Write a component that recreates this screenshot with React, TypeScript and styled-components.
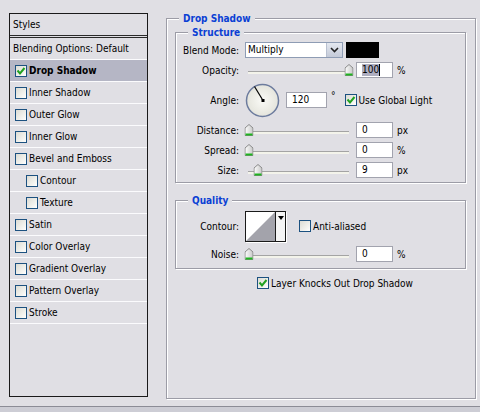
import React from 'react';
import styled, { createGlobalStyle } from 'styled-components';

const BG = '#e0dfe4';

const Global = createGlobalStyle`
  html, body { margin: 0; padding: 0; background: ${BG}; }
  body { font-family: "DejaVu Sans Condensed", "DejaVu Sans", "Liberation Sans", sans-serif; font-size: 10px; color: #000; }
  * { box-sizing: border-box; }
`;

const Window = styled.div`
  width: 480px;
  height: 412px;
  display: flex;
  flex-direction: column;
  background: ${BG};
  overflow: hidden;
`;

const Main = styled.div`
  flex: 1;
  display: flex;
  align-items: flex-start;
  padding: 13px 0 0 9px;
  gap: 18px;
`;

const Footer = styled.div`
  height: 6px;
  border-top: 1px solid #8c8c96;
  background: #cdcdd5;
`;

/* ---------- left list ---------- */
const StylesPanel = styled.div`
  width: 139px;
  height: 384px;
  border: 1px solid #1a1a1a;
  display: flex;
  flex-direction: column;
`;

const PanelHeader = styled.div`
  height: 24px;
  line-height: 21px;
  padding-left: 3px;
  border-bottom: 3px double #2a2a2a;
`;

const ListRow = styled.div<{ $indent?: boolean; $active?: boolean; $plain?: boolean }>`
  height: 22px;
  border-bottom: 1px solid #fbfbfd;
  display: flex;
  align-items: center;
  gap: 2px;
  padding-left: ${(p) => (p.$plain ? 3 : p.$indent ? 16 : 5)}px;
  background: ${(p) => (p.$active ? '#b5b6c5' : 'transparent')};
  font-weight: ${(p) => (p.$active ? 700 : 400)};
  white-space: nowrap;
`;

/* ---------- checkbox ---------- */
const Box = styled.span`
  width: 12px;
  height: 12px;
  flex: none;
  border: 1px solid #1c5180;
  background: linear-gradient(135deg, #dcdcd4 0%, #f4f4f0 70%, #ffffff 100%);
  display: inline-flex;
  align-items: center;
  justify-content: center;
`;

const Check = ({ checked }: { checked?: boolean }) => (
  <Box>
    {checked && (
      <svg width="10" height="10" viewBox="0 0 10 10">
        <path d="M1.5 4.5 L4 7.5 L8.5 2" fill="none" stroke="#21a121" strokeWidth="2" />
      </svg>
    )}
  </Box>
);

/* ---------- group boxes ---------- */
const OuterGroup = styled.div`
  position: relative;
  width: 310px;
  height: 381px;
  margin-top: 5px;
  border: 1px solid #9c9ca6;
  box-shadow: inset 1px 1px 0 #fff, 1px 1px 0 #fff;
  padding: 13px 9px 0 8px;
  display: flex;
  flex-direction: column;
`;

const InnerGroup = styled.div<{ $mt?: number; $pt: number; $pb: number }>`
  position: relative;
  width: 291px;
  margin-top: ${(p) => p.$mt ?? 0}px;
  border: 1px solid #9c9ca6;
  box-shadow: inset 1px 1px 0 #fff, 1px 1px 0 #fff;
  padding: ${(p) => p.$pt}px 0 ${(p) => p.$pb}px 0;
  display: flex;
  flex-direction: column;
  gap: 4px;
`;

const Legend = styled.span<{ $left: number }>`
  position: absolute;
  top: -8px;
  left: ${(p) => p.$left}px;
  padding: 0 4px;
  background: ${BG};
  color: #0b3fd4;
  font-weight: 700;
  line-height: 15px;
`;

/* ---------- rows ---------- */
const Row = styled.div<{ $h?: number; $pl?: number }>`
  display: flex;
  align-items: center;
  height: ${(p) => p.$h ?? 16}px;
  padding-left: ${(p) => p.$pl ?? 0}px;
  white-space: nowrap;
`;

const Label = styled.span`
  width: 63px;
  margin-right: 6px;
  text-align: right;
  flex: none;
`;

const Select = styled.div`
  width: 98px;
  height: 16px;
  border: 1px solid #8e9cb4;
  background: #fff;
  display: flex;
  align-items: stretch;
`;

const SelectText = styled.span`
  flex: 1;
  padding-left: 2px;
  line-height: 14px;
`;

const SelectButton = styled.span`
  width: 16px;
  border-left: 1px solid #b8c0d0;
  background: linear-gradient(#e4e8f0, #c4cad8);
  display: flex;
  align-items: center;
  justify-content: center;
`;

const Swatch = styled.div`
  width: 33px;
  height: 16px;
  margin-left: 3px;
  background: #000;
`;

const Input = styled.div<{ $w?: number; $ml?: number }>`
  width: ${(p) => p.$w ?? 37}px;
  height: 16px;
  margin-left: ${(p) => p.$ml ?? 3}px;
  border: 1px solid #a2a3ae;
  background: #fff;
  padding-left: 5px;
  line-height: 14px;
  display: flex;
  align-items: center;
  flex: none;
`;

const Selected = styled.span`
  background: #aeaec0;
  line-height: 12px;
`;

const Caret = styled.span`
  width: 1px;
  height: 12px;
  background: #000;
`;

const Unit = styled.span<{ $ml?: number }>`
  margin-left: ${(p) => p.$ml ?? 4}px;
`;

const Deg = styled.span`
  margin-left: 4px;
  align-self: flex-start;
  margin-top: 8px;
`;

const CheckLabel = styled.label<{ $ml: number }>`
  display: flex;
  align-items: center;
  gap: 2px;
  margin-left: ${(p) => p.$ml}px;
`;

/* ---------- slider ---------- */
const SliderWrap = styled.div`
  position: relative;
  width: 108px;
  height: 16px;
  flex: none;
`;

const Track = styled.div`
  position: absolute;
  left: 3px;
  right: 4px;
  top: 9px;
  height: 3px;
  border-top: 1px solid #a4a4a4;
  background: #f3f3ea;
`;

const Thumb = styled.svg`
  position: absolute;
  top: 2px;
  transform: translateX(-50%);
`;

const Slider = ({ pos }: { pos: number }) => (
  <SliderWrap>
    <Track />
    <Thumb width="9" height="12" viewBox="0 0 9 12" style={{ left: `calc(4px + ${pos} * (100% - 8px))` }}>
      <defs>
        <linearGradient id="tg" x1="0" y1="0" x2="1" y2="0">
          <stop offset="0" stopColor="#fdfdfd" />
          <stop offset="1" stopColor="#c8c8c8" />
        </linearGradient>
      </defs>
      <polygon points="0.5,4 4.5,0.5 8.5,4 8.5,11.5 0.5,11.5" fill="url(#tg)" stroke="#8a8a8a" />
      <rect x="1" y="9.5" width="7" height="2" fill="#1fb31f" />
    </Thumb>
  </SliderWrap>
);

/* ---------- dial ---------- */
const Dial = () => (
  <svg width="35" height="35" viewBox="0 0 35 35" style={{ flex: 'none' }}>
    <defs>
      <radialGradient id="dg" cx="0.5" cy="0.5" r="0.5">
        <stop offset="0" stopColor="#fafaf6" />
        <stop offset="1" stopColor="#e4e4dc" />
      </radialGradient>
    </defs>
    <circle cx="17.5" cy="17.5" r="16" fill="url(#dg)" stroke="#6d7c9e" strokeWidth="1.5" />
    <line x1="18" y1="17.5" x2="9.5" y2="3.5" stroke="#000" strokeWidth="1.2" />
    <rect x="16.5" y="16" width="3" height="3" fill="#000" />
  </svg>
);

/* ---------- contour ---------- */
const ContourBox = styled.div`
  width: 41px;
  height: 31px;
  border: 1px solid #1a1a1a;
  background: #fff;
  display: flex;
  box-shadow: 1px 1px 0 #fff;
`;

const ContourArrow = styled.div`
  flex: 1;
  border-left: 1px solid #1a1a1a;
  background: #f4f4f4;
  display: flex;
  justify-content: center;
  padding-top: 4px;
`;

const App = () => {
  const items: { label: string; indent?: boolean; checked?: boolean; active?: boolean }[] = [
    { label: 'Drop Shadow', checked: true, active: true },
    { label: 'Inner Shadow' },
    { label: 'Outer Glow' },
    { label: 'Inner Glow' },
    { label: 'Bevel and Emboss' },
    { label: 'Contour', indent: true },
    { label: 'Texture', indent: true },
    { label: 'Satin' },
    { label: 'Color Overlay' },
    { label: 'Gradient Overlay' },
    { label: 'Pattern Overlay' },
    { label: 'Stroke' },
  ];
  return (
    <Window>
      <Global />
      <Main>
        <StylesPanel>
          <PanelHeader>Styles</PanelHeader>
          <ListRow $plain>Blending Options: Default</ListRow>
          {items.map((it) => (
            <ListRow key={it.label} $indent={it.indent} $active={it.active}>
              <Check checked={it.checked} />
              <span>{it.label}</span>
            </ListRow>
          ))}
        </StylesPanel>

        <OuterGroup>
          <Legend $left={12}>Drop Shadow</Legend>
          <InnerGroup $pt={9} $pb={4}>
            <Legend $left={12}>Structure</Legend>
            <Row>
              <Label>Blend Mode:</Label>
              <Select>
                <SelectText>Multiply</SelectText>
                <SelectButton>
                  <svg width="9" height="6" viewBox="0 0 9 6">
                    <path d="M1 1 L4.5 4.5 L8 1" fill="none" stroke="#222" strokeWidth="1.6" />
                  </svg>
                </SelectButton>
              </Select>
              <Swatch />
            </Row>
            <Row>
              <Label>Opacity:</Label>
              <Slider pos={1} />
              <Input>
                <Selected>100</Selected>
                <Caret />
              </Input>
              <Unit>%</Unit>
            </Row>
            <Row $h={36}>
              <Label>Angle:</Label>
              <Dial />
              <Input $w={41} $ml={6}>120</Input>
              <Deg>°</Deg>
              <CheckLabel $ml={9}>
                <Check checked />
                <span>Use Global Light</span>
              </CheckLabel>
            </Row>
            <Row>
              <Label>Distance:</Label>
              <Slider pos={0} />
              <Input>0</Input>
              <Unit>px</Unit>
            </Row>
            <Row>
              <Label>Spread:</Label>
              <Slider pos={0} />
              <Input>0</Input>
              <Unit>%</Unit>
            </Row>
            <Row>
              <Label>Size:</Label>
              <Slider pos={0.09} />
              <Input>9</Input>
              <Unit>px</Unit>
            </Row>
          </InnerGroup>

          <InnerGroup $mt={17} $pt={9} $pb={6}>
            <Legend $left={12}>Quality</Legend>
            <Row $h={32}>
              <Label>Contour:</Label>
              <ContourBox>
                <svg width="29" height="29" viewBox="0 0 29 29" style={{ flex: 'none' }}>
                  <polygon points="0,29 29,0 29,29" fill="#a3a3ab" />
                </svg>
                <ContourArrow>
                  <svg width="6" height="4" viewBox="0 0 6 4">
                    <polygon points="0,0 6,0 3,4" fill="#000" />
                  </svg>
                </ContourArrow>
              </ContourBox>
              <CheckLabel $ml={13}>
                <Check />
                <span>Anti-aliased</span>
              </CheckLabel>
            </Row>
            <Row>
              <Label>Noise:</Label>
              <Slider pos={0} />
              <Input>0</Input>
              <Unit>%</Unit>
            </Row>
          </InnerGroup>

          <Row $pl={82} style={{ marginTop: 6 }}>
            <CheckLabel $ml={0}>
              <Check checked />
              <span>Layer Knocks Out Drop Shadow</span>
            </CheckLabel>
          </Row>
        </OuterGroup>
      </Main>
      <Footer />
    </Window>
  );
};

export default App;
